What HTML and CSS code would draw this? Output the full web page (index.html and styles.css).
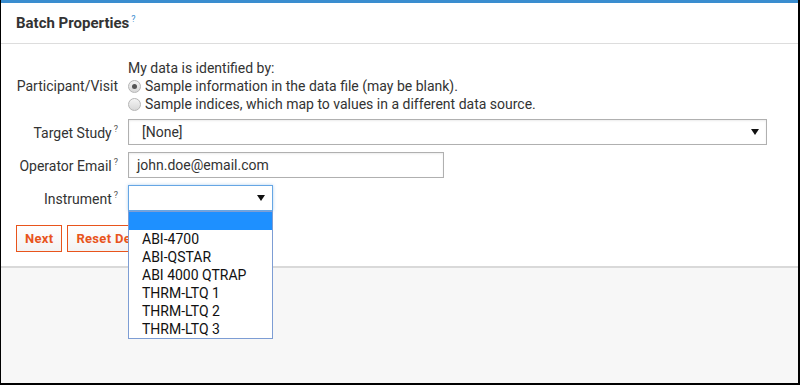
FILE: index.html
```html
<!DOCTYPE html>
<html lang="en">
<head>
    <meta charset="UTF-8">
    <title>Batch Properties</title>
    <link rel="stylesheet" href="styles.css">
</head>
<body>
    <div class="frame">
        <div class="panel">
            <div class="panel-header">
                <h2 class="panel-title">Batch Properties<sup class="help help-blue">?</sup></h2>
            </div>

            <div class="panel-body">
                <div class="form-row">
                    <div class="form-label">Participant/Visit</div>
                    <div class="form-field">
                        <div class="line">My data is identified by:</div>
                        <label class="line radio-line">
                            <span class="radio checked"></span>
                            Sample information in the data file (may be blank).
                        </label>
                        <label class="line radio-line">
                            <span class="radio"></span>
                            Sample indices, which map to values in a different data source.
                        </label>
                    </div>
                </div>

                <div class="form-row">
                    <div class="form-label">Target Study<sup class="help">?</sup></div>
                    <div class="form-field">
                        <div class="select select-wide">
                            <span>[None]</span>
                            <span class="caret"></span>
                        </div>
                    </div>
                </div>

                <div class="form-row">
                    <div class="form-label">Operator Email<sup class="help">?</sup></div>
                    <div class="form-field">
                        <div class="text-input">john.doe@email.com</div>
                    </div>
                </div>

                <div class="form-row">
                    <div class="form-label">Instrument<sup class="help">?</sup></div>
                    <div class="form-field">
                        <div class="select-wrap">
                            <div class="select select-small focused">
                                <span></span>
                                <span class="caret"></span>
                            </div>
                            <ul class="dropdown">
                                <li class="active">&nbsp;</li>
                                <li>ABI-4700</li>
                                <li>ABI-QSTAR</li>
                                <li>ABI 4000 QTRAP</li>
                                <li>THRM-LTQ 1</li>
                                <li>THRM-LTQ 2</li>
                                <li>THRM-LTQ 3</li>
                            </ul>
                        </div>
                    </div>
                </div>

                <div class="button-group">
                    <button class="btn">Next</button>
                    <button class="btn">Reset Defaults</button>
                </div>
            </div>
        </div>
    </div>
</body>
</html>
```

FILE: styles.css
```css
* {
    box-sizing: border-box;
    margin: 0;
    padding: 0;
}

body {
    font-family: Roboto, 'Liberation Sans', sans-serif;
    font-size: 14px;
    color: #222;
}

.frame {
    width: 800px;
    height: 385px;
    background: #f7f7f7;
    border-left: 1px solid #000;
    border-right: 2px solid #000;
    border-bottom: 2px solid #000;
}

.panel {
    background: white;
    border-top: 3px solid #3a8dcf;
    border-bottom: 2px solid #d9d9d9;
}

.panel-header {
    height: 41px;
    padding: 0 15px;
    border-bottom: 1px solid #ddd;
    display: flex;
    align-items: center;
}

.panel-title {
    font-size: 15px;
    font-weight: 700;
    color: #333;
}

.help {
    font-size: 9px;
    font-weight: 400;
    color: #555;
    margin-left: 2px;
    vertical-align: 6px;
}

.help-blue {
    color: #3a8dcf;
}

.panel-body {
    padding: 15px 15px 14px;
}

.form-row {
    display: flex;
    align-items: center;
    margin-bottom: 7px;
}

.form-row:first-child {
    margin-bottom: 6px;
}

.form-label {
    width: 102px;
    margin-right: 10px;
    text-align: right;
    color: #333;
    white-space: nowrap;
}

.line {
    height: 18px;
    line-height: 18px;
    color: #333;
}

.radio-line {
    display: flex;
    align-items: center;
}

.radio {
    width: 13px;
    height: 13px;
    border-radius: 50%;
    border: 1px solid #b5b5b5;
    background: linear-gradient(#f4f4f4, #d8d8d8);
    margin-right: 4px;
    display: flex;
    align-items: center;
    justify-content: center;
}

.radio.checked::after {
    content: "";
    width: 5px;
    height: 5px;
    border-radius: 50%;
    background: #555;
}

.select,
.text-input {
    height: 26px;
    border: 1px solid #b0b0b0;
    box-shadow: inset 0 1px 2px rgba(0, 0, 0, 0.08);
    display: flex;
    align-items: center;
    justify-content: space-between;
    color: #333;
    background: white;
}

.select {
    padding: 0 7px 0 13px;
}

.text-input {
    width: 316px;
    padding: 0 8px;
}

.select-wide {
    width: 639px;
}

.select-small {
    width: 145px;
}

.select.focused {
    border-color: #66a6e4;
    box-shadow: 0 0 3px rgba(102, 166, 228, 0.5);
}

.caret {
    width: 0;
    height: 0;
    border-left: 4px solid transparent;
    border-right: 4px solid transparent;
    border-top: 6px solid #111;
}

.select-wrap {
    position: relative;
}

.dropdown {
    position: absolute;
    top: 26px;
    left: 0;
    width: 145px;
    list-style: none;
    background: white;
    border: 1px solid #7d9dd4;
    z-index: 10;
}

.dropdown li {
    height: 18px;
    line-height: 18px;
    padding-left: 13px;
    color: #111;
}

.dropdown li.active {
    background: #1e90ff;
}

.button-group {
    display: flex;
    gap: 5px;
    margin-top: 14px;
}

.btn {
    height: 27px;
    padding: 0 8px;
    border: 1px solid #e8541c;
    background: linear-gradient(#ffffff, #f2f2f2);
    color: #e8541c;
    font-family: inherit;
    font-size: 13px;
    font-weight: 700;
    letter-spacing: 0.3px;
    cursor: pointer;
}
```
